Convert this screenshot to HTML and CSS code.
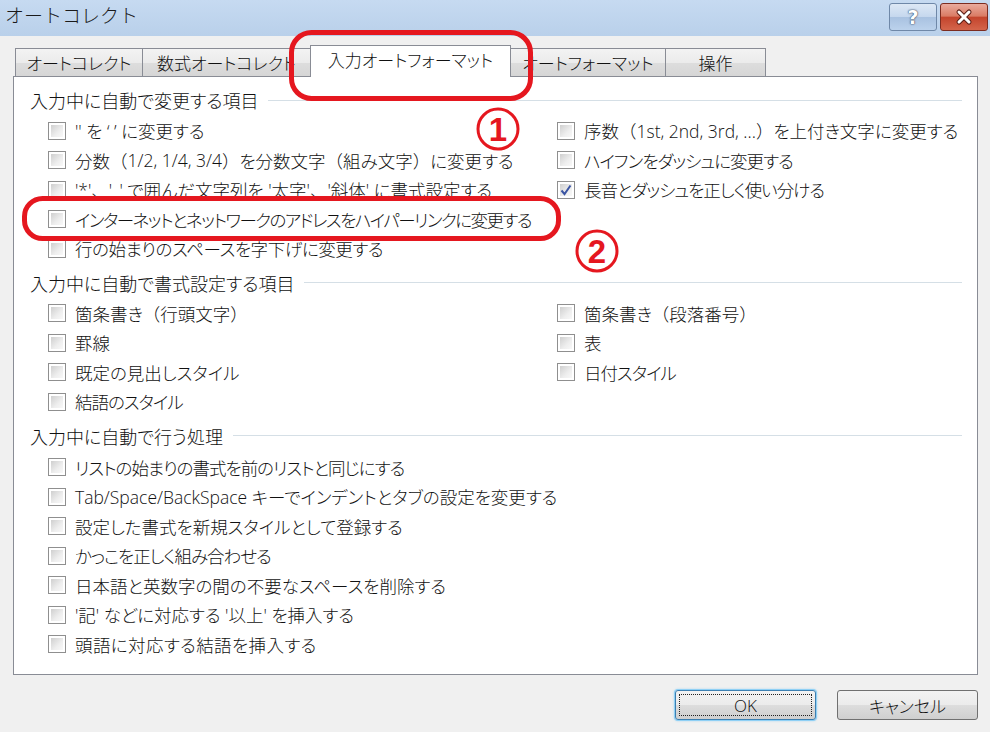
FILE: index.html
```html
<!DOCTYPE html>
<html lang="ja">
<head>
    <meta charset="UTF-8">
    <title>オートコレクト</title>
    <link rel="stylesheet" href="styles.css">
</head>
<body>
<div class="window">
    <!-- Title bar -->
    <header class="titlebar">
        <span class="title">オートコレクト</span>
        <div class="caption-buttons">
            <button class="cap-btn help">?</button>
            <button class="cap-btn close">
                <svg width="20" height="18" viewBox="0 0 20 18">
                    <path d="M5 4 L15 14 M15 4 L5 14" stroke="#5a1d14" stroke-width="5" stroke-linecap="round"/>
                    <path d="M5 4 L15 14 M15 4 L5 14" stroke="#fff" stroke-width="3" stroke-linecap="round"/>
                </svg>
            </button>
        </div>
    </header>

    <div class="dialog">
        <!-- Tabs -->
        <ul class="tabs">
            <li class="tab t1">オートコレクト</li>
            <li class="tab t2">数式オートコレクト</li>
            <li class="tab t3 active">入力オートフォーマット</li>
            <li class="tab t4">オートフォーマット</li>
            <li class="tab t5">操作</li>
        </ul>

        <div class="panel">
            <section class="group">
                <h3 class="group-title">入力中に自動で変更する項目</h3>
                <div class="options">
                    <div class="col">
                        <label class="option"><span class="cb"></span>'' を ‘ ’ に変更する</label>
                        <label class="option"><span class="cb"></span>分数<span class="fw">（</span>1/2, 1/4, 3/4<span class="fw">）</span>を分数文字<span class="fw">（</span>組み文字<span class="fw">）</span>に変更する</label>
                        <label class="option"><span class="cb"></span>'*'<span class="fw">、</span>'_' で囲んだ文字列を '太字'<span class="fw">、</span>'斜体' に書式設定する</label>
                        <label class="option tighter"><span class="cb"></span>インターネットとネットワークのアドレスをハイパーリンクに変更する</label>
                        <label class="option tight-half"><span class="cb"></span>行の始まりのスペースを字下げに変更する</label>
                    </div>
                    <div class="col right">
                        <label class="option"><span class="cb"></span>序数<span class="fw">（</span>1st, 2nd, 3rd, ...<span class="fw">）</span>を上付き文字に変更する</label>
                        <label class="option tight"><span class="cb"></span>ハイフンをダッシュに変更する</label>
                        <label class="option tight"><span class="cb checked"><svg width="16" height="16" viewBox="0 0 16 16"><path d="M3.5 8.5 L6.5 12 L12.5 3.5" fill="none" stroke="#3b55a3" stroke-width="2"/></svg></span>長音とダッシュを正しく使い分ける</label>
                    </div>
                </div>
            </section>

            <section class="group">
                <h3 class="group-title">入力中に自動で書式設定する項目</h3>
                <div class="options">
                    <div class="col">
                        <label class="option"><span class="cb"></span>箇条書き<span class="fw">（</span>行頭文字<span class="fw">）</span></label>
                        <label class="option"><span class="cb"></span>罫線</label>
                        <label class="option"><span class="cb"></span>既定の見出しスタイル</label>
                        <label class="option tight"><span class="cb"></span>結語のスタイル</label>
                    </div>
                    <div class="col right">
                        <label class="option"><span class="cb"></span>箇条書き<span class="fw">（</span>段落番号<span class="fw">）</span></label>
                        <label class="option"><span class="cb"></span>表</label>
                        <label class="option tight"><span class="cb"></span>日付スタイル</label>
                    </div>
                </div>
            </section>

            <section class="group last">
                <h3 class="group-title">入力中に自動で行う処理</h3>
                <div class="options">
                    <div class="col">
                        <label class="option tight"><span class="cb"></span>リストの始まりの書式を前のリストと同じにする</label>
                        <label class="option"><span class="cb"></span>Tab/Space/BackSpace キーでインデントとタブの設定を変更する</label>
                        <label class="option"><span class="cb"></span>設定した書式を新規スタイルとして登録する</label>
                        <label class="option tight"><span class="cb"></span>かっこを正しく組み合わせる</label>
                        <label class="option"><span class="cb"></span>日本語と英数字の間の不要なスペースを削除する</label>
                        <label class="option"><span class="cb"></span>'記' などに対応する '以上' を挿入する</label>
                        <label class="option wide"><span class="cb"></span>頭語に対応する結語を挿入する</label>
                    </div>
                </div>
            </section>
        </div>

        <div class="actions">
            <button class="btn default"><span class="focus">OK</span></button>
            <button class="btn">キャンセル</button>
        </div>
    </div>

    <!-- Red annotations drawn over the dialog -->
    <svg class="marks" width="990" height="732" viewBox="0 0 990 732">
        <rect x="291.5" y="32.5" width="239" height="66" rx="20" fill="none" stroke="#e5171f" stroke-width="5"/>
        <rect x="24.5" y="198.5" width="534" height="40" rx="18" fill="none" stroke="#e5171f" stroke-width="5"/>
        <circle cx="498" cy="129" r="20" fill="none" stroke="#e5171f" stroke-width="3"/>
        <text x="498" y="141" class="mark-num">1</text>
        <circle cx="597" cy="251" r="20" fill="none" stroke="#e5171f" stroke-width="3"/>
        <text x="597" y="263" class="mark-num">2</text>
    </svg>
</div>
</body>
</html>
```

FILE: styles.css
```css
/* Global */
* {
    box-sizing: border-box;
}

body {
    margin: 0;
    width: 990px;
    height: 732px;
    overflow: hidden;
    background-color: #f0f0f0;
    font-family: "Open Sans", "Noto Sans CJK JP", sans-serif;
    font-feature-settings: "palt";
    font-weight: 300;
    color: #111;
}

.window {
    position: relative;
    height: 732px;
}

/* Title bar */
.titlebar {
    height: 36px;
    display: flex;
    align-items: flex-start;
    padding-left: 5px;
    background: linear-gradient(#c6daf1, #b9d0ea);
}

.title {
    font-size: 19px;
    line-height: 32px;
    font-feature-settings: normal;
    color: #1a1a1a;
}

.caption-buttons {
    margin-left: auto;
    display: flex;
    gap: 3px;
    padding-top: 3px;
    padding-right: 2px;
}

.cap-btn {
    width: 48px;
    height: 28px;
    padding: 0;
    border-radius: 3px;
    display: flex;
    align-items: center;
    justify-content: center;
}

.cap-btn.help {
    border: 1px solid #6f88a8;
    background: linear-gradient(#dde8f5 0%, #c6d8ee 48%, #a9c2e1 52%, #bcd2ec 100%);
    color: #fff;
    font-family: "DejaVu Sans", sans-serif;
    font-weight: bold;
    font-size: 19px;
    text-shadow: 0 0 2px #2c3f5a, 0 0 1px #2c3f5a;
}

.cap-btn.close {
    border: 1px solid #7c2c20;
    background: linear-gradient(#eaab9e 0%, #da7c65 46%, #c4452d 52%, #d4654b 100%);
}

/* Dialog body */
.dialog {
    padding: 9px 12px 0 13px;
}

.tabs {
    list-style: none;
    margin: 0 0 0 2px;
    padding: 0;
    display: flex;
    align-items: flex-end;
    height: 31px;
    position: relative;
    z-index: 2;
}

.tab {
    height: 28px;
    border: 1px solid #898c95;
    border-bottom: none;
    margin-right: -1px;
    background: linear-gradient(#f3f3f3 0%, #ebebeb 50%, #dddddd 51%, #d6d6d6 100%);
    font-size: 17px;
    display: flex;
    align-items: center;
    justify-content: center;
    padding-bottom: 1px;
}

.tab.t1 { width: 128px; }
.tab.t2 { width: 169px; }
.tab.t3 { width: 201px; }
.tab.t4 { width: 156px; }
.tab.t5 { width: 101px; }

.tab.active {
    height: 32px;
    margin-bottom: -1px;
    background: #fff;
    padding-bottom: 4px;
    position: relative;
    z-index: 3;
}

.panel {
    height: 599px;
    width: 965px;
    background: #fff;
    border: 1px solid #898c95;
    padding-top: 8px;
    position: relative;
    z-index: 1;
}

/* Option groups */
.group + .group {
    margin-top: 4px;
}

.group.last .options {
    margin-top: 2px;
}

.group-title {
    margin: 0;
    height: 30px;
    display: flex;
    align-items: center;
    padding-left: 16px;
    padding-right: 15px;
    font-size: 18px;
    font-weight: 300;
    color: #111;
}

.group-title::after {
    content: "";
    flex: 1;
    height: 1px;
    margin-left: 10px;
    background-color: #d5dfe6;
}

.options {
    display: flex;
    padding-left: 34px;
    margin-top: 1px;
}

.col {
    width: 509px;
}

.col.right {
    flex: 1;
}

.option {
    height: 29.5px;
    display: flex;
    align-items: center;
    font-size: 17.5px;
    white-space: nowrap;
}

.option.tight-half { letter-spacing: -0.4px; }
.option.tight { letter-spacing: -1px; }
.option.tighter { letter-spacing: -1.5px; }
.option.wide { letter-spacing: 0.4px; }

.fw {
    font-feature-settings: normal;
}

.cb {
    flex: none;
    position: relative;
    width: 18px;
    height: 18px;
    margin-right: 9px;
    border: 1px solid #8f8f8f;
    background: #fff;
}

.cb::before {
    content: "";
    position: absolute;
    inset: 2px;
    background: linear-gradient(135deg, #cfcfcf, #eeeeee 60%, #f8f8f8);
}

.cb svg {
    position: absolute;
    left: 0;
    top: 0;
    z-index: 1;
}

/* Footer buttons */
.actions {
    display: flex;
    justify-content: flex-end;
    gap: 21px;
    margin-top: 15px;
    width: 965px;
}

.btn {
    width: 141px;
    height: 30px;
    border: 1px solid #707070;
    border-radius: 3px;
    background: linear-gradient(#f2f2f2 0%, #ebebeb 50%, #dddddd 51%, #cfcfcf 100%);
    font-family: "Open Sans", "Noto Sans CJK JP", sans-serif;
    font-feature-settings: "palt";
    font-weight: 300;
    font-size: 17px;
    color: #111;
    padding: 0;
    display: flex;
    align-items: center;
    justify-content: center;
}

.btn.default {
    border-color: #3c7fb1;
    box-shadow: 0 0 0 1px #8fd0f5, 0 0 3px #5fb8ee;
    padding: 3px;
}

.btn .focus {
    flex: 1;
    align-self: stretch;
    border: 1px dotted #222;
    display: flex;
    align-items: center;
    justify-content: center;
}

/* Annotations */
.marks {
    position: absolute;
    left: 0;
    top: 0;
    z-index: 10;
    pointer-events: none;
}

.mark-num {
    fill: #e5171f;
    font-family: "Liberation Sans", sans-serif;
    font-weight: bold;
    font-size: 33px;
    text-anchor: middle;
}
```
